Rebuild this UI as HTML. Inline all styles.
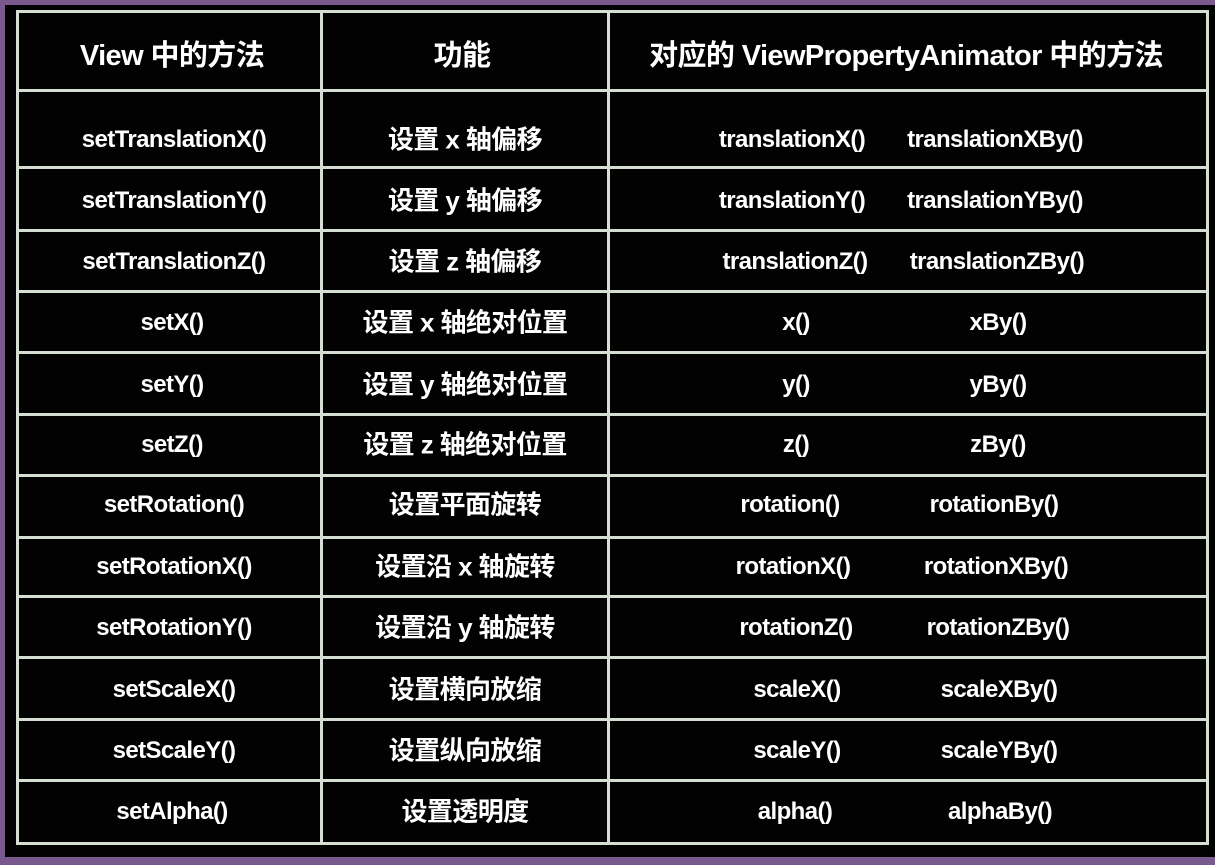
<!DOCTYPE html>
<html><head><meta charset="utf-8"><style>
body{margin:0;width:1215px;height:865px;background:#7a5a8e;overflow:hidden;position:relative;font-family:"Liberation Sans","Noto Sans CJK SC",sans-serif}
#bg{position:absolute;left:5px;top:5px;width:1210px;height:852px;background:#030203}
.h{position:absolute;height:3px;background:#d6ddd2;left:17px;width:1192px}
.v{position:absolute;width:3px;background:#d6ddd2;top:10px;height:835px}
.t{position:absolute;color:#fff;font-weight:bold;font-size:24px;transform:translate(-50%,-50%);white-space:nowrap;letter-spacing:-0.6px}
.c{font-size:26px;margin-top:-2px}
.hd{font-size:29px}
</style></head><body><div id="bg"></div>
<div class="h" style="top:10px"></div><div class="h" style="top:89px"></div><div class="h" style="top:166px"></div><div class="h" style="top:229px"></div><div class="h" style="top:290px"></div><div class="h" style="top:351px"></div><div class="h" style="top:413px"></div><div class="h" style="top:474px"></div><div class="h" style="top:536px"></div><div class="h" style="top:595px"></div><div class="h" style="top:656px"></div><div class="h" style="top:718px"></div><div class="h" style="top:779px"></div><div class="h" style="top:842px"></div>
<div class="v" style="left:16px"></div><div class="v" style="left:320px"></div><div class="v" style="left:607px"></div><div class="v" style="left:1206px"></div>
<div class="t hd" style="left:172px;top:53px">View 中的方法</div>
<div class="t hd" style="left:462px;top:53px">功能</div>
<div class="t hd" style="left:906px;top:53px">对应的 ViewPropertyAnimator 中的方法</div>
<div class="t" style="left:174px;top:140px">setTranslationX()</div><div class="t c" style="left:465px;top:140px">设置 x 轴偏移</div><div class="t" style="left:792px;top:140px">translationX()</div><div class="t" style="left:995px;top:140px">translationXBy()</div>
<div class="t" style="left:174px;top:201px">setTranslationY()</div><div class="t c" style="left:465px;top:201px">设置 y 轴偏移</div><div class="t" style="left:792px;top:201px">translationY()</div><div class="t" style="left:995px;top:201px">translationYBy()</div>
<div class="t" style="left:174px;top:262px">setTranslationZ()</div><div class="t c" style="left:465px;top:262px">设置 z 轴偏移</div><div class="t" style="left:795px;top:262px">translationZ()</div><div class="t" style="left:997px;top:262px">translationZBy()</div>
<div class="t" style="left:172px;top:323px">setX()</div><div class="t c" style="left:465px;top:323px">设置 x 轴绝对位置</div><div class="t" style="left:796px;top:323px">x()</div><div class="t" style="left:998px;top:323px">xBy()</div>
<div class="t" style="left:172px;top:385px">setY()</div><div class="t c" style="left:465px;top:385px">设置 y 轴绝对位置</div><div class="t" style="left:796px;top:385px">y()</div><div class="t" style="left:998px;top:385px">yBy()</div>
<div class="t" style="left:172px;top:445px">setZ()</div><div class="t c" style="left:465px;top:445px">设置 z 轴绝对位置</div><div class="t" style="left:796px;top:445px">z()</div><div class="t" style="left:998px;top:445px">zBy()</div>
<div class="t" style="left:174px;top:505px">setRotation()</div><div class="t c" style="left:465px;top:505px">设置平面旋转</div><div class="t" style="left:790px;top:505px">rotation()</div><div class="t" style="left:994px;top:505px">rotationBy()</div>
<div class="t" style="left:174px;top:567px">setRotationX()</div><div class="t c" style="left:465px;top:567px">设置沿 x 轴旋转</div><div class="t" style="left:793px;top:567px">rotationX()</div><div class="t" style="left:996px;top:567px">rotationXBy()</div>
<div class="t" style="left:174px;top:628px">setRotationY()</div><div class="t c" style="left:465px;top:628px">设置沿 y 轴旋转</div><div class="t" style="left:796px;top:628px">rotationZ()</div><div class="t" style="left:998px;top:628px">rotationZBy()</div>
<div class="t" style="left:174px;top:690px">setScaleX()</div><div class="t c" style="left:465px;top:690px">设置横向放缩</div><div class="t" style="left:797px;top:690px">scaleX()</div><div class="t" style="left:999px;top:690px">scaleXBy()</div>
<div class="t" style="left:174px;top:751px">setScaleY()</div><div class="t c" style="left:465px;top:751px">设置纵向放缩</div><div class="t" style="left:797px;top:751px">scaleY()</div><div class="t" style="left:999px;top:751px">scaleYBy()</div>
<div class="t" style="left:172px;top:812px">setAlpha()</div><div class="t c" style="left:465px;top:812px">设置透明度</div><div class="t" style="left:795px;top:812px">alpha()</div><div class="t" style="left:1000px;top:812px">alphaBy()</div>
</body></html>
